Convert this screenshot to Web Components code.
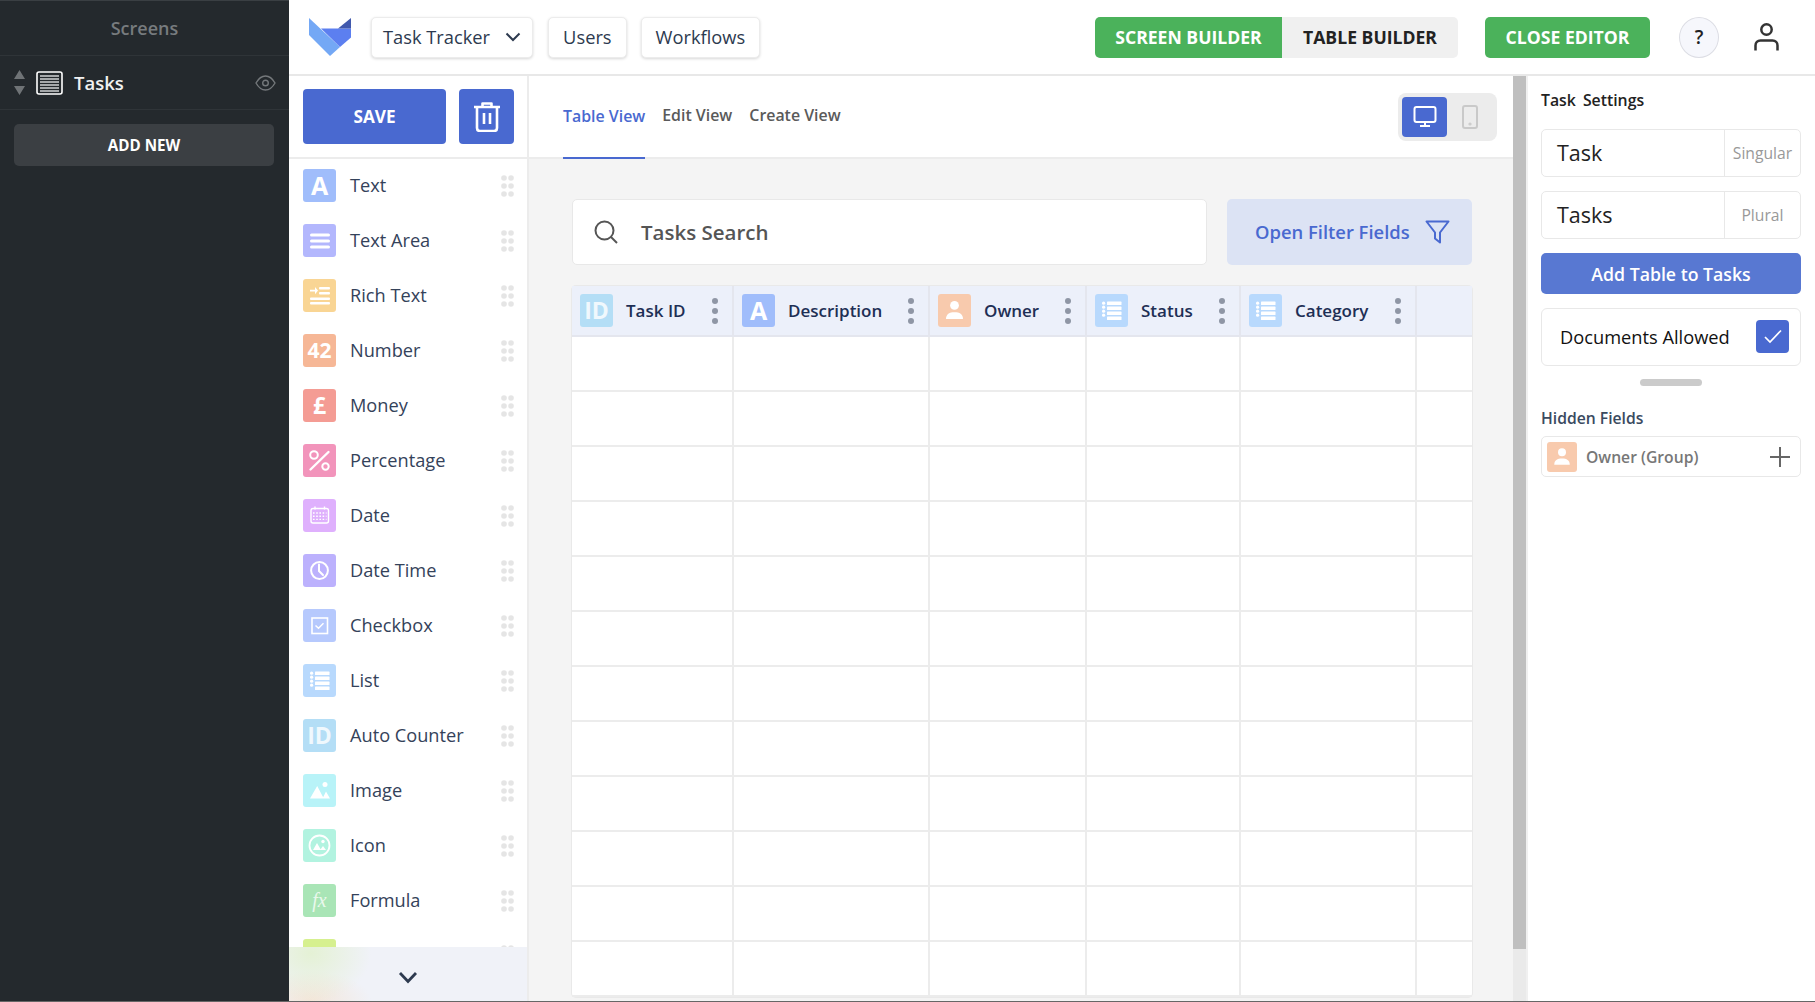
<!DOCTYPE html>
<html>
<head>
<meta charset="utf-8">
<title>Screen Builder</title>
<style>
html, body { margin: 0; height: 1002px; overflow: hidden; background: #666; }
body { font-family: "Open Sans", "Liberation Sans", sans-serif; }
</style>
</head>
<body>
<app-shell>
  <screens-sidebar slot="side"></screens-sidebar>
  <top-bar slot="top">
    <nav-chip drop>Task Tracker</nav-chip>
    <nav-chip>Users</nav-chip>
    <nav-chip>Workflows</nav-chip>
  </top-bar>
  <field-palette slot="palette">
    <field-item type="text">Text</field-item>
    <field-item type="textarea">Text Area</field-item>
    <field-item type="rich">Rich Text</field-item>
    <field-item type="number">Number</field-item>
    <field-item type="money">Money</field-item>
    <field-item type="percent">Percentage</field-item>
    <field-item type="date">Date</field-item>
    <field-item type="datetime">Date Time</field-item>
    <field-item type="checkbox">Checkbox</field-item>
    <field-item type="list">List</field-item>
    <field-item type="id">Auto Counter</field-item>
    <field-item type="image">Image</field-item>
    <field-item type="icon">Icon</field-item>
    <field-item type="formula">Formula</field-item>
    <field-item type="lime"></field-item>
  </field-palette>
  <view-panel slot="main">
    <tasks-table>
      <col-head type="id" width="162">Task ID</col-head>
      <col-head type="text" width="196">Description</col-head>
      <col-head type="person" width="157">Owner</col-head>
      <col-head type="list" width="154">Status</col-head>
      <col-head type="list" width="176">Category</col-head>
    </tasks-table>
  </view-panel>
  <settings-panel slot="settings"></settings-panel>
</app-shell>

<script>
// Glyphs of the field types, all in a 33x33 box
const GLYPHS = {
    text: { bg: '#a0bdfb', label: 'A', size: 25 },
    textarea: { bg: '#b3b7fd', svg: '<rect x="7" y="9.5" width="20" height="3" rx="1.5"/><rect x="7" y="15.5" width="20" height="3" rx="1.5"/><rect x="7" y="21.5" width="20" height="3" rx="1.5"/>' },
    rich: { bg: '#f9d594', svg: '<rect x="16" y="8" width="11" height="2.6" rx="1"/><rect x="16" y="13" width="11" height="2.6" rx="1"/><rect x="7" y="18.4" width="20" height="2.6" rx="1"/><rect x="7" y="23" width="20" height="2.6" rx="1"/><path d="M7 10.7h5V8l3 3.6-3 3.6v-2.7H7z"/>' },
    number: { bg: '#f6b796', label: '42', size: 21 },
    money: { bg: '#f49c94', label: '£', size: 23 },
    percent: { bg: '#f294bb', svg: '<g fill="none" stroke="#fff" stroke-width="2"><circle cx="11" cy="11" r="3.8"/><circle cx="22.5" cy="22.5" r="3.2"/><path d="M7.5 25.5 25.5 8" stroke-width="2.4" stroke-linecap="round"/></g>' },
    date: { bg: '#dfb0fd', svg: '<g fill="none" stroke="#fff" stroke-width="1.4"><rect x="8" y="9.5" width="17.5" height="14.5" rx="2"/><path d="M12 7.5v3M21.5 7.5v3"/><path d="M10 14h13.5M10 17.2h13.5M10 20.4h13.5" stroke-dasharray="1.6 1.6"/></g>' },
    datetime: { bg: '#bcb1fd', svg: '<g fill="none" stroke="#fff" stroke-width="2"><circle cx="16.5" cy="16.5" r="8.4"/><path d="M16 10.5v6.5l4 4" stroke-linecap="round"/></g>' },
    checkbox: { bg: '#b6c9fd', svg: '<g fill="none" stroke="#fff"><rect x="9" y="9" width="15.5" height="15.5" stroke-width="1.6"/><path d="M12.5 16.5l3 2.8 5-5" stroke-width="1.5"/></g>' },
    list: { bg: '#b8d9fd', svg: '<circle cx="8.6" cy="9.2" r="1.6"/><circle cx="8.6" cy="13.2" r="1.6"/><circle cx="8.6" cy="17.2" r="1.6"/><circle cx="8.6" cy="21.2" r="1.6"/><rect x="12" y="7.6" width="14.5" height="3.4" rx=".6"/><rect x="12" y="12.6" width="14.5" height="3.4" rx=".6"/><rect x="12" y="17.6" width="14.5" height="3.4" rx=".6"/><rect x="12" y="22.6" width="14.5" height="3.4" rx=".6"/>' },
    id: { bg: '#b4def6', label: 'ID', size: 23, dim: true },
    image: { bg: '#b8f3f8', svg: '<path d="M7 24.5 14.2 12l6.6 12.5zM19.5 24.5 23 17.5l4 7z"/><circle cx="22" cy="10.5" r="2.5"/>' },
    icon: { bg: '#b2f3e0', svg: '<circle cx="16.5" cy="16.5" r="10" fill="none" stroke="#fff" stroke-width="1.8"/><path d="M10 21l4-7 4 7zM17 21l3-4 3 4z"/><circle cx="20" cy="12.5" r="1.7"/>' },
    formula: { bg: '#a9e5b6', fx: true },
    lime: { bg: '#d6f08f', svg: '' },
    person: { bg: '#f8caad', svg: '<circle cx="16.5" cy="11.4" r="4.4"/><path d="M8 25c0-5 3.4-6.8 8.5-6.8S25 20 25 25z"/>' }
};

class FieldIcon extends HTMLElement {
    constructor() {
        super();
        this._root = this.attachShadow({ mode: 'open' });
    }
    connectedCallback() {
        const g = GLYPHS[this.getAttribute('type')];
        const box = parseInt(this.getAttribute('size') || '33');
        let inner = '';
        if (g.label) {
            inner = `<span style="font-size:${g.size * box / 33}px;opacity:${g.dim ? .8 : 1}">${g.label}</span>`;
        } else if (g.fx) {
            inner = '<span class="fx">fx</span>';
        } else {
            inner = `<svg width="${box}" height="${box}" viewBox="0 0 33 33" fill="#fff">${g.svg}</svg>`;
        }
        this._root.innerHTML = `
        <style>
        :host {
            display: flex;
            flex: none;
            align-items: center;
            justify-content: center;
            width: ${box}px;
            height: ${box}px;
            border-radius: 3px;
            background: ${g.bg};
            color: #fff;
            font-family: "Open Sans", sans-serif;
            font-weight: 700;
            line-height: 1;
        }
        svg { display: block; }
        .fx { font: italic 400 20px "Liberation Serif", serif; opacity: .75; }
        </style>
        ${inner}`;
    }
}
window.customElements.define('field-icon', FieldIcon);

class AppShell extends HTMLElement {
    constructor() {
        super();
        this._root = this.attachShadow({ mode: 'open' });
    }
    connectedCallback() {
        this._root.innerHTML = `
        <style>
        :host {
            display: grid;
            grid-template-columns: 289px 1fr;
            height: 1001px;
            overflow: hidden;
            background: #fff;
        }
        .right { display: flex; flex-direction: column; min-width: 0; height: 1001px; }
        .work { display: flex; flex: 1; min-height: 0; }
        .track { flex: none; width: 13px; background: #eaeaea; display: flex; flex-direction: column; }
        .thumb { height: 873px; background: #bfbfbf; }
        </style>
        <slot name="side"></slot>
        <div class="right">
          <slot name="top"></slot>
          <div class="work">
            <slot name="palette"></slot>
            <slot name="main"></slot>
            <div class="track"><div class="thumb"></div></div>
            <slot name="settings"></slot>
          </div>
        </div>`;
    }
}
window.customElements.define('app-shell', AppShell);

class ScreensSidebar extends HTMLElement {
    constructor() {
        super();
        this._root = this.attachShadow({ mode: 'open' });
    }
    connectedCallback() {
        this._root.innerHTML = `
        <style>
        :host {
            display: block;
            background: #24292d;
            border-top: 1px solid #3a3f43;
            box-sizing: border-box;
            color: #fff;
            font-family: "Open Sans", sans-serif;
        }
        .title {
            height: 54px;
            display: flex;
            align-items: center;
            justify-content: center;
            font-size: 18px;
            font-weight: 600;
            color: #777b7e;
            border-bottom: 1px solid #2f3438;
        }
        .row {
            height: 53px;
            display: flex;
            align-items: center;
            padding: 0 13px 0 14px;
            border-bottom: 1px solid #2f3438;
        }
        .name { font-size: 18.500px; font-weight: 600; color: #f1f1f1; margin-left: 11px; flex: 1; }
        .arrows { margin-right: 11px; }
        svg { display: block; }
        .add {
            margin: 14px 15px 0 14px;
            height: 42px;
            padding-bottom: 1px;
            box-sizing: border-box;
            border-radius: 5px;
            background: #3b3f43;
            display: flex;
            align-items: center;
            justify-content: center;
            font-size: 15.200px;
            font-weight: 700;
        }
        </style>
        <div class="title">Screens</div>
        <div class="row">
          <svg class="arrows" width="11" height="25" viewBox="0 0 11 25" fill="#6f7376"><path d="M5.5 0 11 9H0zM5.5 25 0 16h11z"/></svg>
          <svg width="27" height="24" viewBox="0 0 27 24"><rect x="1" y="1" width="25" height="22" rx="2" fill="#24292d" stroke="#fff" stroke-width="1.6"/><path d="M4 5h19M4 8h19M4 11h19M4 14h19M4 17h19M4 20h19" stroke="#a5a8aa" stroke-width="1.8"/></svg>
          <span class="name">Tasks</span>
          <svg width="21" height="16" viewBox="0 0 21 16" fill="none" stroke="#74787b" stroke-width="1.4"><path d="M1 8c2.6-4.6 5.8-7 9.5-7s6.900 2.400 9.500 7c-2.600 4.600-5.800 7-9.500 7S3.600 12.600 1 8z"/><circle cx="10.500" cy="8" r="2.800"/></svg>
        </div>
        <div class="add">ADD NEW</div>`;
    }
}
window.customElements.define('screens-sidebar', ScreensSidebar);

class NavChip extends HTMLElement {
    constructor() {
        super();
        this._root = this.attachShadow({ mode: 'open' });
    }
    connectedCallback() {
        const drop = this.hasAttribute('drop') ? '<svg width="16" height="10" viewBox="0 0 16 10" fill="none" stroke="#2d3a4f" stroke-width="2"><path d="M1.500 1.500 8 8l6.500-6.500"/></svg>' : '';
        this._root.innerHTML = `
        <style>
        :host {
            display: flex;
            align-items: center;
            gap: 15px;
            box-sizing: border-box;
            height: 41px;
            padding: 0 14px 1px 14px;
            background: #fff;
            border: 1px solid #ececec;
            border-radius: 5px;
            box-shadow: 0 1px 3px rgba(0,0,0,.16);
            font-size: 18.300px;
            color: #2d3a4f;
        }
        :host([drop]) { padding: 0 11px 1px 11px; margin-right: 1px; }
        </style>
        <slot></slot>${drop}`;
    }
}
window.customElements.define('nav-chip', NavChip);

class TopBar extends HTMLElement {
    constructor() {
        super();
        this._root = this.attachShadow({ mode: 'open' });
    }
    connectedCallback() {
        this._root.innerHTML = `
        <style>
        :host {
            display: flex;
            flex: none;
            align-items: center;
            box-sizing: border-box;
            height: 76px;
            padding: 0 36px 0 20px;
            border-bottom: 2px solid #e8e8e8;
            font-family: "Open Sans", sans-serif;
        }
        .logo { margin-right: 20px; display: block; }
        .chips { display: flex; gap: 14px; flex: 1; }
        .builder { display: flex; height: 41px; border-radius: 5px; overflow: hidden; font-size: 17.600px; font-weight: 700; }
        .builder div, .close { display: flex; align-items: center; justify-content: center; }
        .on { width: 187px; background: #4bb25b; color: #fff; }
        .off { width: 176px; background: #f0f0f0; color: #222; }
        .close {
            width: 165px; height: 41px; margin-left: 27px; border-radius: 5px;
            background: #4bb25b; color: #fff; font-size: 17.600px; font-weight: 700;
        }
        .help {
            display: flex; align-items: center; justify-content: center;
            box-sizing: border-box; width: 40px; height: 41px; margin-left: 29px;
            border: 1px solid #dcdde4; border-radius: 50%;
            background: #f6f7fc; color: #222; font-size: 19px; font-weight: 600;
        }
        .user { margin-left: 35px; display: block; }
        </style>
        <svg class="logo" width="42" height="38" viewBox="0 0 42 38">
          <path d="M0 0 31 29 21 38 0 17z" fill="#74a8f5"/>
          <path d="M12 10.600H42V19.600L31 29z" fill="#5c7ff0"/>
          <path d="M29 10.600 42 0V10.600z" fill="#4159ad"/>
        </svg>
        <div class="chips"><slot></slot></div>
        <div class="builder"><div class="on">SCREEN BUILDER</div><div class="off">TABLE BUILDER</div></div>
        <div class="close">CLOSE EDITOR</div>
        <div class="help">?</div>
        <svg class="user" width="25" height="28" viewBox="0 0 25 28" fill="none" stroke="#333" stroke-width="2.500"><circle cx="12.500" cy="6.500" r="5.200"/><path d="M1.500 27.500v-5c0-3 2-5 5-5h12c3 0 5 2 5 5v5"/></svg>`;
    }
}
window.customElements.define('top-bar', TopBar);

class FieldItem extends HTMLElement {
    constructor() {
        super();
        this._root = this.attachShadow({ mode: 'open' });
    }
    connectedCallback() {
        this._root.innerHTML = `
        <style>
        :host {
            display: flex;
            flex: none;
            align-items: center;
            height: 33px;
            margin-bottom: 22px;
            font-size: 18.200px;
            color: #34425a;
        }
        .label { flex: 1; margin-left: 14px; padding-bottom: 2px; }
        svg { display: block; }
        </style>
        <field-icon type="${this.getAttribute('type')}"></field-icon>
        <span class="label"><slot></slot></span>
        <svg width="13" height="22" viewBox="0 0 13 22" fill="#e5e5e5">
          <circle cx="3" cy="3" r="2.800"/><circle cx="10" cy="3" r="2.800"/>
          <circle cx="3" cy="11" r="2.800"/><circle cx="10" cy="11" r="2.800"/>
          <circle cx="3" cy="19" r="2.800"/><circle cx="10" cy="19" r="2.800"/>
        </svg>`;
    }
}
window.customElements.define('field-item', FieldItem);

class FieldPalette extends HTMLElement {
    constructor() {
        super();
        this._root = this.attachShadow({ mode: 'open' });
    }
    connectedCallback() {
        this._root.innerHTML = `
        <style>
        :host {
            display: flex;
            flex-direction: column;
            flex: none;
            position: relative;
            box-sizing: border-box;
            width: 240px;
            height: 925px;
            border-right: 2px solid #ececec;
            overflow: hidden;
            background: #fff;
            font-family: "Open Sans", sans-serif;
        }
        .actions {
            display: flex;
            flex: none;
            gap: 13px;
            box-sizing: border-box;
            height: 83px;
            padding: 13px 12px 0 14px;
            border-bottom: 2px solid #ececec;
        }
        .save, .trash {
            display: flex; align-items: center; justify-content: center;
            height: 55px; border-radius: 4px; background: #4969d0; color: #fff;
        }
        .save { width: 143px; font-size: 17.200px; font-weight: 700; }
        .trash { width: 55px; }
        .list { display: flex; flex-direction: column; padding: 10px 13px 0 14px; }
        .more {
            position: absolute; left: 0; right: 0; bottom: 0; height: 54px; box-sizing: border-box; padding-top: 6px;
            display: flex; align-items: center; justify-content: center;
            background:
              radial-gradient(60px 50px at 22px 6px, rgba(214,240,170,.45), transparent),
              radial-gradient(60px 30px at 22px 54px, rgba(245,225,205,.7), transparent),
              #f0f2f8;
        }
        svg { display: block; }
        </style>
        <div class="actions">
          <div class="save">SAVE</div>
          <div class="trash">
            <svg width="28" height="31" viewBox="0 0 28 31" fill="none" stroke="#fff" stroke-width="2.600" stroke-linejoin="round"><path d="M1 6h26M9.500 6V2.500h9V6M4 6v21c0 1.800 1.200 3 3 3h14c1.800 0 3-1.200 3-3V6M11 12v11M17 12v11"/></svg>
          </div>
        </div>
        <div class="list"><slot></slot></div>
        <div class="more">
          <svg width="20" height="13" viewBox="0 0 20 13" fill="none" stroke="#2d3a4f" stroke-width="2.800"><path d="M2 2l8 8.500L18 2"/></svg>
        </div>`;
    }
}
window.customElements.define('field-palette', FieldPalette);

class ViewPanel extends HTMLElement {
    constructor() {
        super();
        this._root = this.attachShadow({ mode: 'open' });
    }
    connectedCallback() {
        this._root.innerHTML = `
        <style>
        :host {
            display: flex;
            flex-direction: column;
            flex: 1;
            min-width: 0;
            background: #f4f4f4;
            font-family: "Open Sans", sans-serif;
        }
        .tabs {
            display: flex;
            flex: none;
            align-items: center;
            box-sizing: border-box;
            height: 83px;
            padding: 0 16px 0 34px;
            background: #fff;
            border-bottom: 2px solid #ececec;
        }
        .tab {
            display: flex; align-items: center;
            height: 83px; box-sizing: border-box;
            padding-bottom: 4px;
            margin-right: 17px;
            font-size: 15.900px; font-weight: 600; color: #5a5a5a;
        }
        .tab.on { color: #4969d0; border-bottom: 2px solid #4969d0; margin-bottom: -2px; padding-bottom: 2px; }
        .grow { flex: 1; }
        .device {
            display: flex; align-items: center;
            box-sizing: border-box; width: 99px; height: 48px; padding: 4px;
            border-radius: 8px; background: #ececec;
        }
        .screen {
            display: flex; align-items: center; justify-content: center;
            width: 45px; height: 40px; border-radius: 4px; background: #4969d0;
        }
        .phone { margin-left: 15px; }
        .body { flex: 1; min-height: 0; overflow: hidden; padding: 40px 41px 0 43px; }
        .search { display: flex; gap: 20px; height: 66px; margin-bottom: 21px; }
        .box {
            flex: 1; display: flex; align-items: center; gap: 23px;
            padding-left: 21px; box-sizing: border-box;
            background: #fff; border: 1px solid #e8e8e8; border-radius: 5px;
            font-size: 20.500px; font-weight: 600; color: #555;
        }
        .filter {
            flex: none; width: 245px; box-sizing: border-box; padding: 0 0 1px 28px; display: flex; align-items: center; gap: 15px;
            background: #dce3f4; border-radius: 5px;
            font-size: 18.400px; font-weight: 600; color: #4969d0;
        }
        svg { display: block; }
        </style>
        <div class="tabs">
          <div class="tab on">Table View</div>
          <div class="tab">Edit View</div>
          <div class="tab">Create View</div>
          <div class="grow"></div>
          <div class="device">
            <div class="screen">
              <svg width="24" height="21" viewBox="0 0 24 21" fill="none" stroke="#fff" stroke-width="2"><rect x="1.500" y="1" width="21" height="15" rx="2"/><path d="M12 16v4M7 20h10"/></svg>
            </div>
            <svg class="phone" width="16" height="24" viewBox="0 0 16 24" fill="none" stroke="#c9c9c9" stroke-width="2"><rect x="1" y="1" width="14" height="22" rx="2"/><circle cx="8" cy="19" r=".6"/></svg>
          </div>
        </div>
        <div class="body">
          <div class="search">
            <div class="box">
              <svg width="24" height="24" viewBox="0 0 24 24" fill="none" stroke="#555" stroke-width="2"><circle cx="10.500" cy="10.500" r="9"/><path d="M17 17l6 6"/></svg>
              Tasks Search
            </div>
            <div class="filter">
              Open Filter Fields
              <svg width="25" height="24" viewBox="0 0 25 24" fill="none" stroke="#4969d0" stroke-width="2" stroke-linejoin="round"><path d="M1.500 1.500h22l-8.500 11v10l-5-4v-6z"/></svg>
            </div>
          </div>
          <slot></slot>
        </div>`;
    }
}
window.customElements.define('view-panel', ViewPanel);

class ColHead extends HTMLElement {
    constructor() {
        super();
        this._root = this.attachShadow({ mode: 'open' });
    }
    connectedCallback() {
        this._root.innerHTML = `
        <style>
        :host {
            display: flex;
            align-items: center;
            box-sizing: border-box;
            height: 100%;
            padding: 0 14px 0 8px;
            border-right: 2px solid #e4e6ee;
            font-size: 17px;
            font-weight: 600;
            color: #1e2f55;
        }
        .label { flex: 1; margin-left: 13px; }
        svg { display: block; }
        </style>
        <field-icon type="${this.getAttribute('type')}"></field-icon>
        <span class="label"><slot></slot></span>
        <svg width="6" height="26" viewBox="0 0 6 26" fill="#8f96a5"><circle cx="3" cy="3" r="3"/><circle cx="3" cy="13" r="3"/><circle cx="3" cy="23" r="3"/></svg>`;
    }
}
window.customElements.define('col-head', ColHead);

class TasksTable extends HTMLElement {
    constructor() {
        super();
        this._root = this.attachShadow({ mode: 'open' });
    }
    connectedCallback() {
        const widths = Array.from(this.querySelectorAll('col-head')).map(c => c.getAttribute('width') + 'px');
        const cols = widths.concat('1fr').join(' ');
        // 12 empty rows
        let cells = '';
        for (let i = 0; i < 12 * (widths.length + 1); i++) {
            cells += '<div class="cell"></div>';
        }
        this._root.innerHTML = `
        <style>
        :host {
            display: block;
            box-sizing: border-box;
            width: 900px;
            height: 711px;
            background: #fff;
            border-radius: 4px;
            box-shadow: 0 0 0 1px #e9e9e9;
        }
        .head {
            display: grid;
            grid-template-columns: ${cols};
            height: 51px;
            box-sizing: border-box;
            background: #ecf0fa;
            border-bottom: 2px solid #e4e6ee;
        }
        ::slotted(col-head) { height: 49px; }
        .rows { display: grid; grid-template-columns: ${cols}; grid-auto-rows: 55px; }
        .cell { border-right: 2px solid #ececec; border-bottom: 2px solid #ececec; }
        .cell:nth-child(6n) { border-right: 0; }
        </style>
        <div class="head"><slot></slot><div></div></div>
        <div class="rows">${cells}</div>`;
    }
}
window.customElements.define('tasks-table', TasksTable);

class SettingsPanel extends HTMLElement {
    constructor() {
        super();
        this._root = this.attachShadow({ mode: 'open' });
    }
    connectedCallback() {
        this._root.innerHTML = `
        <style>
        :host {
            display: flex;
            flex-direction: column;
            flex: none;
            box-sizing: border-box;
            width: 289px;
            padding: 0 14px 0 13px;
            border-left: 2px solid #f0f0f0;
            background: #fff;
            font-family: "Open Sans", sans-serif;
        }
        .head { height: 47px; margin-bottom: 6px; display: flex; align-items: center; font-size: 15.800px; font-weight: 600; color: #222; word-spacing: 3px; }
        .input {
            display: flex; box-sizing: border-box; height: 48px; margin-bottom: 14px;
            border: 1px solid #e8e8e8; border-radius: 5px;
        }
        .value { flex: 1; display: flex; align-items: center; padding: 0 0 2px 15px; font-size: 21.500px; color: #222; }
        .hint {
            flex: none; width: 76px; box-sizing: border-box; display: flex; align-items: center; justify-content: center;
            border-left: 1px solid #e8e8e8; font-size: 15.700px; color: #999;
        }
        .add {
            display: flex; align-items: center; justify-content: center;
            height: 41px; border-radius: 5px; background: #5878d2; color: #fff;
            font-size: 17.700px; font-weight: 600;
        }
        .docs {
            display: flex; align-items: center; justify-content: space-between; box-sizing: border-box;
            height: 58px; margin-top: 14px; padding: 0 11px 2px 18px;
            border: 1px solid #e8e8e8; border-radius: 6px;
            font-size: 18.250px; color: #111;
        }
        .check {
            display: flex; align-items: center; justify-content: center;
            width: 33px; height: 33px; border-radius: 4px; background: #4969d0;
        }
        .grip { align-self: center; width: 62px; height: 7px; margin-top: 13px; border-radius: 4px; background: #cbcbcb; }
        .hidden { margin-top: 23px; margin-bottom: -1px; height: 18px; line-height: 18px; font-size: 15.700px; font-weight: 600; color: #3a4a60; }
        .field {
            display: flex; align-items: center; box-sizing: border-box;
            height: 41px; margin-top: 10px; padding: 0 10px 0 5px;
            border: 1px solid #e8e8e8; border-radius: 5px;
            font-size: 15.700px; font-weight: 600; color: #777;
        }
        .field span { flex: 1; margin-left: 9px; }
        svg { display: block; }
        </style>
        <div class="head">Task Settings</div>
        <div class="input"><div class="value">Task</div><div class="hint">Singular</div></div>
        <div class="input"><div class="value">Tasks</div><div class="hint">Plural</div></div>
        <div class="add">Add Table to Tasks</div>
        <div class="docs">
          Documents Allowed
          <div class="check"><svg width="18" height="15" viewBox="0 0 18 15" fill="none" stroke="#fff" stroke-width="1.700"><path d="M1 8l5 5L17 1.500"/></svg></div>
        </div>
        <div class="grip"></div>
        <div class="hidden">Hidden Fields</div>
        <div class="field">
          <field-icon type="person" size="30"></field-icon>
          <span>Owner (Group)</span>
          <svg width="20" height="20" viewBox="0 0 20 20" stroke="#666" stroke-width="2"><path d="M10 0v20M0 10h20"/></svg>
        </div>`;
    }
}
window.customElements.define('settings-panel', SettingsPanel);
</script>
</body>
</html>
